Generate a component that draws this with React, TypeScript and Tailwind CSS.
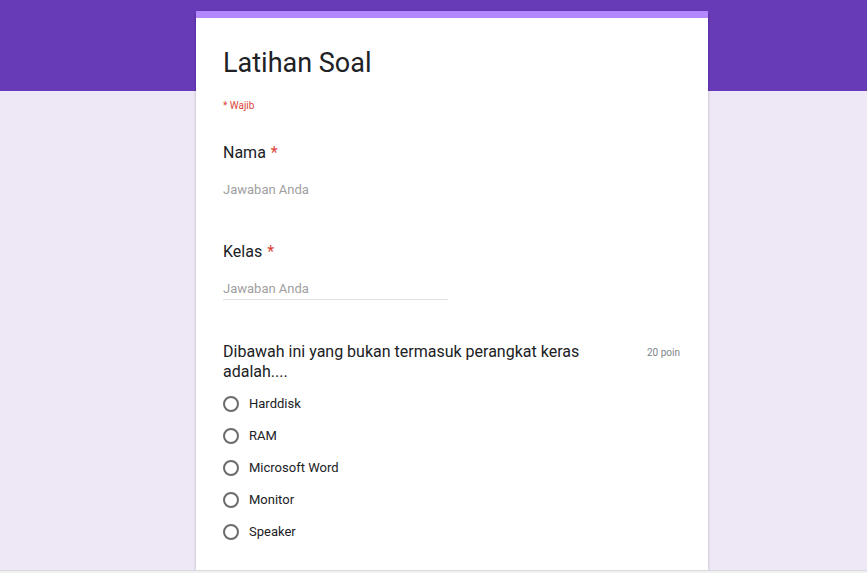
const options = ["Harddisk", "RAM", "Microsoft Word", "Monitor", "Speaker"];

function Required() {
  return <span className="ml-[5px] text-[#db4437]">*</span>;
}

function ShortAnswer({ label, underline }: { label: string; underline?: boolean }) {
  return (
    <div className="flex flex-col">
      <div className="text-[16px] leading-[24px] text-[#202124]">
        {label}
        <Required />
      </div>
      <div
        className={`mt-[15px] w-[225px] border-b text-[13px] leading-[20px] text-[#a0a0a0] ${
          underline ? "border-[#e0e0e0]" : "border-transparent"
        }`}
      >
        Jawaban Anda
      </div>
    </div>
  );
}

export default function App() {
  return (
    <div
      className="flex h-[573px] flex-col overflow-hidden"
      style={{ fontFamily: "Roboto, 'Liberation Sans', sans-serif" }}
    >
      <main className="flex flex-1 flex-col overflow-hidden bg-[linear-gradient(to_bottom,#673ab7_91px,#ede7f6_91px)]">
        <div className="ml-[196px] mt-[11px] flex w-[512px] flex-1 flex-col border-t-[7px] border-[#b388ff] bg-white pl-[27px] pr-[28px] pt-[27px] shadow-[0_1px_1px_0_rgba(0,0,0,0.14),0_1px_3px_0_rgba(0,0,0,0.16)]">
          {/* Header */}
          <h1 className="text-[27px] leading-[36px] text-[#202124]">Latihan Soal</h1>
          <div className="mt-[17px] text-[10px] leading-[16px] text-[#db4437]">* Wajib</div>

          {/* Short answers */}
          <div className="mt-[27px]">
            <ShortAnswer label="Nama" />
          </div>
          <div className="mt-[39px]">
            <ShortAnswer label="Kelas" underline />
          </div>

          {/* Multiple choice */}
          <div className="mt-[41.5px] flex items-start gap-6">
            <div className="flex-1 text-[16px] leading-[20px] text-[#202124]">
              Dibawah ini yang bukan termasuk perangkat keras adalah....
            </div>
            <div className="mt-[3px] text-[10px] leading-[16px] text-[#80868b]">20 poin</div>
          </div>
          <div className="mt-[6px] flex flex-col">
            {options.map((o) => (
              <div key={o} className="flex h-8 items-center">
                <span className="h-4 w-4 rounded-full border-2 border-[#6b6b6b]" />
                <span className="ml-[10px] text-[13px] text-[#202124]">{o}</span>
              </div>
            ))}
          </div>
        </div>
      </main>
      <div className="h-[3px] border-t border-[#dadada] bg-[#f1f1f1]" />
    </div>
  );
}
